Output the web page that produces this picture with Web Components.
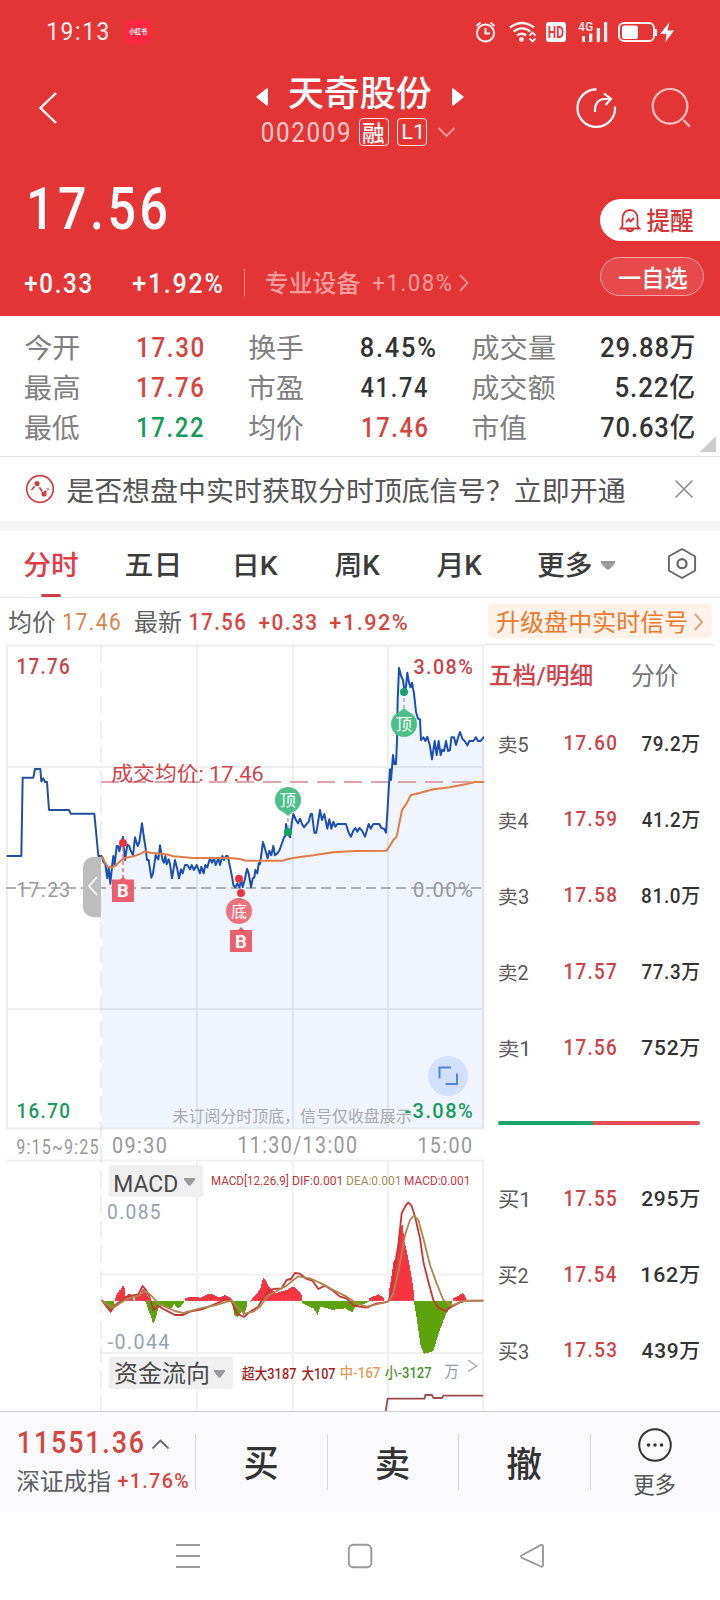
<!DOCTYPE html>
<html lang="zh-CN">
<head>
<meta charset="utf-8">
<title>天奇股份</title>
<style>
html,body{margin:0;padding:0;background:#fff}
body{width:720px;height:1600px;overflow:hidden;font-family:Roboto,"Noto Sans CJK SC",sans-serif}
</style>
</head>
<body>
<stock-app></stock-app>
<script>
const FONT = 'Roboto,"Noto Sans CJK SC",sans-serif';
const ctx = document.createElement('canvas').getContext('2d');
// Letter spacing in em: figures are tracked out, and then condensed to their box
const track = s => /^[-+\d][\d.:~\/%]*$/.test(s) ? .07 : /^\d/.test(s) ? .035 : 0;
// Ink metrics of a string at 100px
function ink(s, weight) {
  ctx.font = `${weight} 100px ${FONT}`;
  const m = ctx.measureText(s);
  return {l: -m.actualBoundingBoxLeft, w: m.actualBoundingBoxRight + m.actualBoundingBoxLeft + track(s) * 100 * (s.length - 1),
    a: m.actualBoundingBoxAscent, h: m.actualBoundingBoxAscent + m.actualBoundingBoxDescent,
    fa: m.fontBoundingBoxAscent, fd: m.fontBoundingBoxDescent};
}
function make(name, html, after) {
  const t = document.createElement('template');
  t.innerHTML = html;
  customElements.define(name, class extends HTMLElement {
    constructor() { super(); this.attachShadow({mode: 'open'}).append(t.content.cloneNode(true)); if (after) after(this.shadowRoot, this); }
  });
}

/* <fit-text w h l t b c>: text set to an ink box of w by h, with left/top margins, weight and colour */
customElements.define('fit-text', class extends HTMLElement {
  constructor() {
    super();
    this.attachShadow({mode: 'open'}).innerHTML = `<style>
      :host{display:block;flex:none;box-sizing:border-box}
      span{display:block;width:max-content;white-space:pre;transform-origin:0 0}</style><span><slot></slot></span>`;
  }
  connectedCallback() {
    const g = k => parseFloat(this.getAttribute(k)) || 0;
    const w = g('w'), h = g('h'), b = g('b') || 500, m = ink(this.textContent, b);
    const f = h / m.h, k = w / (m.w * f);
    Object.assign(this.style, {width: w + 'px', height: h + 'px', marginLeft: g('l') + 'px', marginTop: g('t') + 'px'});
    if (this.hasAttribute('c')) this.style.color = this.getAttribute('c');
    const s = this.shadowRoot.querySelector('span');
    const base = h / 2 + (m.fa - m.fd) * f / 2;
    s.style.cssText = `font:${b} ${100 * f}px/${h}px ${FONT};letter-spacing:${track(this.textContent)}em;transform:translate(${-m.l * f * k}px,${m.a * f - base}px) scaleX(${k})`;
  }
});

make('status-bar', `<style>
:host{display:flex;height:64px;align-items:flex-start;color:#fff0f0}
.app{width:24px;height:24px;margin:20px 0 0 18px;border-radius:6px;background:#ff2742;display:flex}
svg{display:block;margin:18px 0 0 322px}
</style>
<fit-text w="60" h="19" l="48" t="22" b="400">19:13</fit-text>
<div class="app"><fit-text w="18" h="6.5" l="3" t="9" b="700" c="#fff">小红书</fit-text></div>
<svg width="208" height="28" viewBox="472 18 208 28" fill="none" stroke="#fff0f0" stroke-width="2">
<circle cx="485.500" cy="33" r="8.600"/><path d="M485.500 28v5.500h4.500M476.500 26l4-3.500M490.500 22.500l4 3.500"/>
<path d="M510 27.500q12-9 24 0M513.500 31.500q8.500-6.500 17 0M517 35.500q5-3.500 9 0" stroke-width="2.500"/><circle cx="521.500" cy="39.500" r="2.400" fill="#fff0f0" stroke="none"/><path d="M529.500 35.500l3-3 3 3M529.500 38.500l3 3 3-3" stroke-width="1.900"/>
<rect x="546" y="22" width="20" height="20" rx="3" fill="#fff" stroke="none"/>
<g fill="#fff0f0" stroke="none"><rect x="582" y="36" width="3" height="6"/><rect x="589" y="33.500" width="3.300" height="8.500"/><rect x="596.700" y="28" width="3.300" height="14"/><rect x="604" y="22" width="3.200" height="20"/></g>
<rect x="619" y="23" width="35" height="18" rx="5"/><rect x="622" y="25.500" width="16" height="13.500" rx="2.500" fill="#fff" stroke="none"/><path d="M656 29v7"/><path d="M669.500 22L660 34h6.500l-1 8L674 30.500h-6.500z" fill="#fff" stroke="none"/>
<g id="t" stroke="none"></g></svg>`, r => r.getElementById('t').innerHTML = T('HD',548.5,26.5,15,11.5,'#e23a3a',700) + T('4G',578.5,22.500,14,9,'#fff0f0',500));

make('title-bar', `<style>
:host{display:flex;height:92px;color:#fff;align-items:flex-start}
svg{display:block;flex:none}
.mid{width:216px;margin-left:189px;padding-top:12px}
.row{display:flex;align-items:flex-start}
.sub{height:29px;margin-top:8px}
.tag{box-sizing:border-box;height:28px;width:30px;border:1.500px solid #ffe2e2;border-radius:4px;display:flex;flex:none}
</style>
<svg width="67" height="62" viewBox="0 64 67 62" fill="none" stroke="#fff" stroke-width="2.400"><path d="M56 93L40.500 108 56 123"/></svg>
<div class="mid"><div class="row">
<svg width="12" height="18" viewBox="0 0 12 18" style="margin-top:12px"><path d="M0 9L10.500 .5h1.500v17h-1.500z" fill="#fff"/></svg>
<fit-text w="142" h="34" l="21" b="500">天奇股份</fit-text>
<svg width="12" height="18" viewBox="0 0 12 18" style="margin:12px 0 0 21px"><path d="M12 9L1.500 .5H0v17h1.500z" fill="#fff"/></svg></div>
<div class="row sub"><fit-text w="87" h="20.5" l="6" t="5" b="400" c="#ffcaca">002009</fit-text>
<div class="tag" style="margin-left:10px"><fit-text w="21" h="20" l="3" t="4" b="500">融</fit-text></div>
<div class="tag" style="margin-left:8px"><fit-text w="18" h="14.500" l="4.500" t="5.500" b="400">L1</fit-text></div>
<svg width="17" height="10" viewBox="0 0 17 10" style="margin:9px 0 0 11px" fill="none" stroke="#ff9c9c" stroke-width="1.800"><path d="M.5 1l8 8 8-8"/></svg></div></div>
<svg width="130" height="50" viewBox="570 83 130 50" style="margin:19px 0 0 98px" fill="none" stroke="#fff" stroke-width="2.200">
<path d="M596.500 89.300A18.800 18.800 0 1 0 615 106.500"/><path d="M595 112c-.5-8 3-13 10-13h5.500M604 93.500l7 5.500-5.500 6"/><g stroke="#ffc4c4"><circle cx="670" cy="106.300" r="17.300"/><path d="M683.500 120l6.500 6.800"/></g></svg>`);

make('price-head', `<style>
:host{display:flex;height:160px;color:#fff;position:relative}
.left{width:600px}.row{display:flex;align-items:flex-start}
.div{width:1px;height:28px;margin:-5px 0 0 22px;background:#f28c8c}
svg{display:block;flex:none}
.right{width:120px}
.pill{box-sizing:border-box;display:flex;align-items:flex-start}
.a{margin-top:43px;height:42px;background:#fff;border-radius:21px 0 0 21px;color:#cf3535}
.b{margin-top:16px;width:104px;height:39px;border:1px solid #f8a0a0;background:#e74a4a;border-radius:20px}
</style>
<div class="left"><fit-text w="136" h="43.500" l="30" t="31" b="500">17.56</fit-text>
<div class="row" style="margin-top:43px"><fit-text w="66" h="20" l="25">+0.33</fit-text><fit-text w="89" h="20" l="42">+1.92%</fit-text><div class="div"></div>
<fit-text w="94" h="23" l="21" t="-2" b="500" c="#f99d9d">专业设备</fit-text><fit-text w="78" h="18" l="13" b="400" c="#f99d9d">+1.08%</fit-text>
<svg width="10" height="18" viewBox="0 0 10 18" style="margin-left:8px" fill="none" stroke="#f99d9d" stroke-width="1.800"><path d="M1 1l7.500 8L1 17"/></svg></div></div>
<div class="right"><div class="pill a"><svg width="24" height="25" viewBox="0 0 24 25" style="margin:9px 0 0 18px" fill="none" stroke="#cf3535" stroke-width="1.800"><path d="M4.500 18v-7C4.500 5.500 7.500 2 12 2s7.500 3.500 7.500 9v7l2 2.500h-19zM8.500 21.500q3.500 3.500 7 0M8 14l3-3 1.500 2.500L16 10"/></svg>
<fit-text w="46" h="23" l="5" t="10" b="500">提醒</fit-text></div>
<div class="pill b"><fit-text w="68" h="23" l="18" t="8.500" b="500">一自选</fit-text></div></div>`);

make('quote-stats', `<style>
:host{display:block;height:141px;box-sizing:border-box;border-bottom:1px solid #e6e6e6;position:relative;padding-top:18.500px}
.row{display:flex;height:40px;color:#333}
.cell{display:flex}
.c1{width:249px}.c2{width:223px}.c3{width:222px;justify-content:space-between}
i{position:absolute;right:4px;bottom:4px;width:16px;height:16px;background:#ccc;clip-path:polygon(100% 0,100% 100%,0 100%)}
</style>
<div class="row"><div class="cell c1"><fit-text w="54" h="26" l="25" b="400" c="#808080">今开</fit-text><fit-text w="65" h="20" l="59" t="3" c="#d6443f">17.30</fit-text></div>
<div class="cell c2"><fit-text w="54" h="26" b="400" c="#808080">换手</fit-text><fit-text w="74" h="20" l="58" t="3">8.45%</fit-text></div>
<div class="cell c3"><fit-text w="83" h="26" b="400" c="#808080">成交量</fit-text><fit-text w="93" h="23.500" t="2">29.88万</fit-text></div></div>
<div class="row"><div class="cell c1"><fit-text w="54" h="26" l="25" b="400" c="#808080">最高</fit-text><fit-text w="65" h="20" l="59" t="3" c="#d6443f">17.76</fit-text></div>
<div class="cell c2"><fit-text w="54" h="26" b="400" c="#808080">市盈</fit-text><fit-text w="66" h="20" l="58" t="3">41.74</fit-text></div>
<div class="cell c3"><fit-text w="83" h="26" b="400" c="#808080">成交额</fit-text><fit-text w="78" h="25.500">5.22亿</fit-text></div></div>
<div class="row"><div class="cell c1"><fit-text w="54" h="26" l="25" b="400" c="#808080">最低</fit-text><fit-text w="65" h="20" l="59" t="3" c="#189a5c">17.22</fit-text></div>
<div class="cell c2"><fit-text w="54" h="26" b="400" c="#808080">均价</fit-text><fit-text w="64" h="20" l="60" t="3" c="#d6443f">17.46</fit-text></div>
<div class="cell c3"><fit-text w="53" h="26" l="1" b="400" c="#808080">市值</fit-text><fit-text w="93" h="25.500">70.63亿</fit-text></div></div><i></i>`);

make('signal-notice', `<style>
:host{display:flex;height:74px;box-sizing:border-box;border-bottom:10px solid #f6f6f6;align-items:flex-start}
svg{display:block;flex:none}</style>
<svg width="30" height="30" viewBox="25 474 30 30" style="margin:17px 0 0 25px" fill="none" stroke="#cf3f45" stroke-width="1.700"><circle cx="40" cy="489" r="13.300"/><path d="M31.500 490l5.500-6.500 6.500 10 5-5" stroke-dasharray="5 1.500"/><g fill="#cf3f45" stroke="none"><circle cx="37" cy="483.500" r="2.600"/><circle cx="44" cy="494" r="2.600"/></g></svg>
<fit-text w="558" h="26" l="12" t="20.500" b="400" c="#555">是否想盘中实时获取分时顶底信号？立即开通</fit-text>
<svg width="18" height="18" viewBox="0 0 18 18" style="margin:23px 0 0 50px" fill="none" stroke="#888" stroke-width="1.500"><path d="M.5.5l17 17M17.500.5l-17 17"/></svg>`);

make('period-tabs', `<style>
:host{display:flex;height:67px;box-sizing:border-box;border-bottom:1px solid #e6e6e6;align-items:flex-start;color:#3c3c3c}
svg{display:block;flex:none}
.on{width:78px;height:66px}
.on i{display:block;width:20px;height:3px;border-radius:1.500px;background:#cf3f48;margin:16px 0 0 41px}</style>
<div class="on"><fit-text w="54" h="26" l="24" t="21" c="#e03a48">分时</fit-text><i></i></div>
<fit-text w="52" h="24" l="48" t="22.500">五日</fit-text>
<fit-text w="42" h="23" l="58" t="23">日K</fit-text>
<fit-text w="45" h="24.500" l="57" t="22.500">周K</fit-text>
<fit-text w="45" h="25" l="57" t="22">月K</fit-text>
<fit-text w="53" h="26" l="56" t="21">更多</fit-text>
<svg width="14" height="9" viewBox="0 0 14 9" style="margin:30px 0 0 10px"><path d="M0 0h14v2L8.500 8.500h-3L0 2z" fill="#999"/></svg>
<svg width="30" height="33" viewBox="667 547 30 33" style="margin:16px 0 0 52px" fill="none" stroke="#666" stroke-width="1.900"><path d="M682 549l12.500 7q.6.4.6 1v13q0 .7-.6 1L682 578l-12.500-7q-.6-.4-.6-1v-13q0-.6.6-1z"/><circle cx="682" cy="563.700" r="4.500" stroke-width="2.300"/></svg>`);

make('quote-line', `<style>
:host{display:flex;height:45px;align-items:flex-start;color:#d6443f}
.up{display:flex;width:224px;height:34px;margin:6px 0 0 81px;border-radius:4px;background:#fff2ea;align-items:flex-start}
svg{display:block}</style>
<fit-text w="46" h="22.500" l="9" t="13" b="400" c="#606060">均价</fit-text><fit-text w="56" h="17" l="9" t="15.500" b="400" c="#d9824f">17.46</fit-text>
<fit-text w="46" h="22.500" l="15" t="13" b="400" c="#606060">最新</fit-text><fit-text w="55" h="17" l="9" t="15.500">17.56</fit-text><fit-text w="57" h="17" l="14" t="15.500">+0.33</fit-text><fit-text w="77" h="17" l="14" t="15.500">+1.92%</fit-text>
<div class="up"><fit-text w="190" h="22.500" l="9" t="7" b="400" c="#e9792b">升级盘中实时信号</fit-text><svg width="10" height="18" viewBox="0 0 10 18" style="margin:9px 0 0 7px" fill="none" stroke="#ec8b4a" stroke-width="1.600"><path d="M1 1l7 8-7 8"/></svg></div>`);

// SVG text set to an ink box at x,y (top-left) of w by h
function T(s, x, y, w, h, c, b = 400) {
  const m = ink(s, b), f = h / m.h, k = w / (m.w * f);
  return `<text transform="translate(${x - m.l * f * k} ${y + m.a * f}) scale(${k} 1)" font-family='${FONT}' font-size="${100 * f}" letter-spacing="${track(s) * 100 * f}" font-weight="${b}" fill="${c}">${s}</text>`;
}
const AUCTION = '20,648 64,648 68,413 100,413 105,387 121,387 124,424 130,415 135,426 141,426 147,510 207,510 212,521 283,521 295,648 306,648 ';
const MORNING = '306,648 310,665 316,672 322,715 326,682 331,731 336,680 340,648 344,675 350,618 354,618 358,634 363,612 369,590 375,660 382,614 388,618 391,630 399,645 405,592 413,618 418,606 426,550 432,594 437,625 441,660 446,660 454,713 459,700 467,645 471,652 475,658 480,616 488,662 492,668 496,648 500,672 506,658 510,672 516,715 525,660 532,688 537,715 543,688 548,700 555,675 562,675 570,688 575,675 582,690 590,675 600,700 604,680 611,700 616,675 622,682 630,655 636,668 642,655 647,675 655,655 660,675 667,648 672,660 678,648 683,648 690,680 697,715 700,735 706,742 712,730 718,742 724,720 ';
const LATER = '8,742 14,720 21,686 26,700 33,742 38,715 43,712 46,690 52,700 56,670 60,672 69,606 76,630 83,655 88,632 94,646 100,618 105,646 112,640 118,632 124,615 132,592 136,588 138,552 144,580 150,592 155,550 160,522 168,540 174,550 180,536 186,552 192,562 200,552 206,545 212,522 216,522 223,578 229,578 240,510 246,540 253,522 262,566 268,538 274,566 280,545 286,560 292,552 318,552 326,578 333,590 340,572 346,564 352,575 358,564 366,572 375,590 386,552 392,566 400,552 418,552 424,564 432,566 438,578 442,520 446,450 450,388 453,420 459,345 463,372 468,372 471,300 473,180 477,84 484,110 489,120 494,155 498,140 502,98 507,128 512,142 516,128 522,160 528,215 534,236 540,238 543,300 550,292 556,303 562,290 570,318 576,358 584,303 590,345 596,303 602,345 606,330 612,333 618,303 624,333 630,330 634,292 642,292 648,315 655,290 660,276 668,298 674,303 682,316 688,303 700,303 708,292 714,303 722,303 732,290';
const shift = (s, d) => s.trim().split(' ').map(p => { const [a, b] = p.split(','); return (+a + d) + ',' + b; }).join(' ');
const DAY = MORNING + shift(LATER, 720);
const AVG = '306,648 315,668 324,680 336,683 348,676 360,664 372,655 400,649 420,642 434,634 450,638 500,643 520,649 580,654 690,654 720,657 ' + shift('18,662 128,662 145,657 165,653 220,646 280,637 345,633 440,632 448,620 460,600 470,590 478,550 486,510 500,490 512,466 550,456 580,448 630,442 680,432 705,426 732,426', 720);
// One-pixel histogram columns along a profile of x,y pairs, from the zero line at y=437
function bars(list, color) {
  let d = '';
  for (const p of list) for (let x = Math.ceil(p[0] / 3) * 3; x < p[p.length - 2]; x += 3) {
    let i = 0; while (p[i + 2] <= x) i += 2;
    const t = (x - p[i]) / (p[i + 2] - p[i]), y = p[i + 1] + (p[i + 3] - p[i + 1]) * t;
    d += `M${x} 437V${y.toFixed(1)}h3V437z`;
  }
  return `<path d="${d}" fill="${color}" shape-rendering="crispEdges"/>`;
}
const RED = [[75,430,78,420,85,408,92,402,98,390,102,398,104,425,118,415,125,425,130,437],[133,425,148,420,155,405,162,400,170,420,176,432],[285,430,300,425,330,428,345,420,362,415,385,428,405,420,425,432],[480,440,486,430,500,415,510,400,518,368,525,375,535,395,545,405,558,415,570,410,590,405,600,398,610,395,620,403,632,418,636,430],[835,430,865,418,880,430],[895,410,902,370,910,315,918,315,924,270,930,215,936,210,942,260,948,285,955,320,962,360,968,395,972,437],[1088,430,1098,425,1118,414,1128,432]];
const GREEN = [[38,440,52,460,60,472,72,450],[165,440,176,470,183,490,188,506,195,490,202,465,210,440],[210,452,230,455,240,462,252,448,260,460,270,455,282,440],[425,445,432,480,443,486,452,470,460,480,470,450],[636,445,655,455,670,460,681,480,690,455,712,460,725,465,745,462,765,460,785,472,795,455,812,450,835,440],[972,450,980,500,990,570,1000,596,1010,594,1028,588,1040,550,1050,520,1065,480,1085,450]];

make('price-chart', `<style>:host{display:block;width:484px;height:768px}svg{display:block}</style>
<svg id="s" width="484" height="768" viewBox="0 643 484 768" fill="none"></svg>`, r => {
  const G = '#4fbf8a', P = '#ea606c', D = '#189f63';
  r.getElementById('s').innerHTML = `
<g transform="translate(0 640) scale(.33333)"><polygon points="${DAY} 1452,1465 306,1465" fill="#f0f4fd"/></g>
<g stroke="#000" stroke-opacity=".065" stroke-width="2"><path d="M6 645.500h478M7 767h477M7 1009h477M6 1128.500h478M7 646v482M197 646v482M293 646v482M388 646v482M483 646v482" /><path d="M6 1160.500h478M101 1274.500h383M101 1353h383M197 1160v251M293 1160v251M388 1160v251M483 1160v251" stroke-opacity=".055"/><path d="M101 646V1411" stroke-dasharray="17 8"/></g>
<path d="M101 782H484" stroke="#dda5a8" stroke-width="1.800" stroke-dasharray="18 9"/>
<path d="M6 888H484" stroke="#97999f" stroke-width="1.700" stroke-dasharray="10 5"/>
${T('17.76',18,659,51,15.500,'#c9424a',500)}${T('17.23',18,882,51,15.500,'#999')}${T('16.70',18,1103,51,15.500,'#189a5c',500)}
${T('3.08%',414,659,58,15.500,'#c9424a',500)}${T('0.00%',414,882,58,15.500,'#999')}
${T('成交均价: 17.46',112,763.500,151,20,'#cf434b')}
<g transform="translate(0 640) scale(.33333)" stroke-width="6" stroke-linejoin="round"><polyline points="${AUCTION}" stroke="#24509a"/><polyline points="${DAY}" stroke="#1c50ae"/><polyline points="${AVG}" stroke="#e07c48"/></g>
<path d="M101 857H93a10 10 0 0 0-10 10v40a10 10 0 0 0 10 10h8z" fill="#bdbdbd"/><path d="M97 877l-8 9 8 9" stroke="#fff" stroke-width="1.800"/>
<path d="M123 847v30" stroke="${P}" stroke-width="1.300" stroke-dasharray="4 3"/>
<path d="M112 879.500h8l3-3 3 3h8V902h-22zM230 930h8l3-3 3 3h8v22h-22z" fill="${P}"/>
${T('B',118,884,10,13,'#fff',700)}${T('B',236,934.500,10,13,'#fff',700)}
<g fill="#e93543"><circle cx="123" cy="843" r="4"/><circle cx="239" cy="878.700" r="4"/><circle cx="241" cy="893" r="4"/></g>
<circle cx="239" cy="911" r="13" fill="${P}" fill-opacity=".88"/>${T('底',231.500,903.500,15,15,'#fff')}
<path d="M288 818v10M404 698v10" stroke="#8fa9a5" stroke-width="1.300" stroke-dasharray="4 3"/>
<g fill="${G}"><circle cx="288" cy="800" r="13"/><path d="M282 811l6 5 6-5z"/><circle cx="404" cy="724" r="13"/><path d="M398 713l6-5 6 5z"/></g>
${T('顶',280.500,793,15,14.500,'#fff')}${T('顶',396.500,717,15,14.500,'#fff')}
<g fill="${D}"><circle cx="288" cy="832" r="4"/><circle cx="404" cy="692" r="4"/></g>
<circle cx="448" cy="1076" r="20" fill="#d2e0fc"/><path d="M439.500 1078.500V1067.500H451M457 1073.500v10.500H445.500" stroke="#4c86d9" stroke-width="2"/>
${T('未订阅分时顶底，信号仅收盘展示',173,1108,238,15.500,'#aaa')}${T('-3.08%',405,1103,67,15.500,'#189a5c',500)}
${T('9:15~9:25',17,1139.500,81,14.500,'#999')}${T('09:30',113,1137,53,16.500,'#999')}${T('11:30/13:00',239,1136,117,18.500,'#999')}${T('15:00',419,1137,52,16.500,'#999')}
<g transform="translate(90 1155) scale(.33333)">${bars(RED,'#f63540')}${bars(GREEN,'#5ca30b')}
<path d="M35 437H1180" stroke="#fff" stroke-opacity=".35" stroke-width="2" stroke-dasharray="6 5"/>
<g stroke-width="5.500" stroke-linejoin="round"><polyline points="35,435 50,455 62,470 75,450 90,440 105,428 125,422 145,418 158,393 168,405 178,425 190,465 205,452 220,462 240,472 255,480 280,480 300,470 340,462 380,445 410,432 425,440 440,475 462,486 480,470 505,455 520,425 535,410 550,402 575,400 590,375 603,372 615,354 630,356 650,372 668,378 685,402 705,392 730,408 750,425 770,430 790,452 830,458 860,445 885,442 895,438 905,410 915,330 925,270 935,175 948,150 955,143 965,152 975,185 990,250 1000,320 1015,380 1030,435 1045,458 1065,468 1085,455 1110,442 1130,437 1180,437" stroke="#c93537"/>
<polyline points="35,435 50,448 70,458 90,445 110,432 145,422 165,408 182,420 205,445 225,455 255,468 280,474 330,460 380,450 425,436 440,455 465,476 490,470 510,455 530,425 560,408 590,392 610,375 625,364 660,370 700,388 730,405 770,425 800,445 830,455 895,440 910,415 925,350 945,240 960,195 972,181 985,195 1000,250 1020,330 1040,385 1060,435 1085,452 1120,438 1180,437" stroke="#ad8650"/>
<polyline points="887,768 893,731 1004,731 1006,720 1026,720 1030,729 1056,729 1060,722 1180,722" stroke="#9c4b4d"/></g></g>
<g fill="#efefef"><rect x="109" y="1165" width="94" height="32" rx="3"/><rect x="109" y="1357" width="124" height="32" rx="3"/></g>
<path d="M184 1178h11v1.500l-4.500 6h-2l-4.500-6zM214 1370h11v1.500l-4.500 6h-2l-4.500-6z" fill="#999"/>
${T('MACD',115,1174,62,18,'#4a4a4a')}${T('资金流向',115,1361.500,93,22.500,'#4a4a4a')}
${T('MACD[12.26.9]',212,1175.500,76,11.500,'#b8393c')}${T('DIF:0.001',293,1176.500,48,9,'#b8393c')}${T('DEA:0.001',347,1176.500,52,9,'#a58a57')}${T('MACD:0.001',405,1176.500,63,9,'#c9393f')}
${T('0.085',108,1204,52,15,'#93a2ae')}${T('-0.044',108,1334,61,15,'#93a2ae')}
${T('超大3187',242,1366,54,14,'#9e1f22',500)}${T('大107',302,1366,33,14,'#9e1f22',500)}${T('中-167',341,1366,39,13.500,'#e69a58',500)}${T('小-3127',385,1366,46,13.500,'#4b9432',500)}${T('万',445,1364.500,13,14,'#8b9bb3')}
<path d="M468 1360l8.500 6-8.500 5.500" stroke="#aaa" stroke-width="1.400"/>`;
});

class OrderBook extends HTMLElement {
  constructor() {
    super();
    const row = ([n, p, v]) => `<div class="row"><fit-text w="${n.endsWith('1') ? 28 : 29}" h="18" b="400" c="#5a5a5a">${n}</fit-text><fit-text w="51" h="15.500" c="#cb4248">${p}</fit-text><fit-text w="57" h="17.500" c="#333">${v}</fit-text></div>`;
    this.attachShadow({mode: 'open'}).innerHTML = `<style>
:host{display:block;width:236px;height:768px;overflow:hidden}
.tabs{display:flex;width:230px;height:92px;box-sizing:border-box;border-top:1px solid #e6e6e6;align-items:flex-start;padding-top:19px;margin-top:1px}
.row{display:grid;grid-template-columns:66px 77px 57.500px;height:76px;margin-left:15px;width:201px;align-items:start}
.ratio{display:flex;width:202px;height:4px;margin:5px 0 66px 14px;border-radius:2px;overflow:hidden}
.ratio i{background:#1ba36b;width:95px}.ratio b{background:#e14e58;flex:1}
</style><div class="tabs"><fit-text w="102" h="23" l="6" c="#cf434b">五档/明细</fit-text><fit-text w="46" h="23" l="40" b="400" c="#777">分价</fit-text></div>
${[['卖5','17.60','79.2万'],['卖4','17.59','41.2万'],['卖3','17.58','81.0万'],['卖2','17.57','77.3万'],['卖1','17.56','752万']].map(row).join('')}
<div class="ratio"><i></i><b></b></div>
${[['买1','17.55','295万'],['买2','17.54','162万'],['买3','17.53','439万']].map(row).join('')}`;
  }
}
customElements.define('order-book', OrderBook);

make('trade-bar', `<style>
:host{display:flex;height:101px;box-sizing:border-box;border-top:1px solid #cfcfd1;background:#fafafc;align-items:flex-start;color:#333}
.idx{width:195px;height:100px;color:#d6443f}.row{display:flex;align-items:flex-start}
.btn{width:131.500px;height:56px;margin-top:22px;border-left:1px solid #d8d8dc;box-sizing:border-box;display:flex;justify-content:center}
.more{width:129px;display:flex;flex-direction:column;align-items:center;justify-content:flex-start}
svg{display:block;flex:none}</style>
<div class="idx"><div class="row"><fit-text w="124" h="23" l="19" t="19">11551.36</fit-text><svg width="17" height="10" viewBox="0 0 17 10" style="margin:27px 0 0 9px" fill="none" stroke="#666" stroke-width="1.800"><path d="M.5 9.500l8-8 8 8"/></svg></div>
<div class="row" style="margin-top:16px"><fit-text w="93" h="22.500" l="17" b="400" c="#5e6066">深证成指</fit-text><fit-text w="70" h="15.500" l="8" t="3.500">+1.76%</fit-text></div></div>
<div class="btn"><fit-text w="32" h="33" t="14">买</fit-text></div><div class="btn"><fit-text w="32" h="33" t="13.500">卖</fit-text></div><div class="btn"><fit-text w="34" h="33.500" t="13.500">撤</fit-text></div>
<div class="btn more"><svg width="36" height="36" viewBox="-18 -18 36 36" style="margin-top:-7px" fill="#333"><circle r="15.800" fill="none" stroke="#333" stroke-width="2"/><circle cx="-6.500" r="1.800"/><circle r="1.800"/><circle cx="6.500" r="1.800"/></svg><fit-text w="41" h="21" t="10.500" b="400" c="#555">更多</fit-text></div>`);

make('system-nav', `<style>:host{display:block;height:88px;background:#fff}svg{display:block}</style>
<svg width="720" height="88" viewBox="0 1512 720 88" fill="none" stroke="#999" stroke-width="1.900"><path d="M176 1545h24M176 1556h24M176 1567h24"/><rect x="348.800" y="1544.800" width="22.500" height="22.500" rx="4.500"/><path d="M541 1545q2-.6 2 1.500v18.500q0 2.300-2 1.500L522 1557.800q-2-1.300 0-2.600z"/></svg>`);

make('stock-app', `<style>
:host{display:flex;flex-direction:column;width:720px;height:1600px;background:#fff}
header{background:#e33536;height:316px;flex:none}
main{display:flex;height:768px}
:host>*{flex:none}
</style>
<header><status-bar></status-bar><title-bar></title-bar><price-head></price-head></header>
<quote-stats></quote-stats><signal-notice></signal-notice><period-tabs></period-tabs><quote-line></quote-line>
<main><price-chart></price-chart><order-book></order-book></main>
<trade-bar></trade-bar><system-nav></system-nav>`);
</script>
</body>
</html>
